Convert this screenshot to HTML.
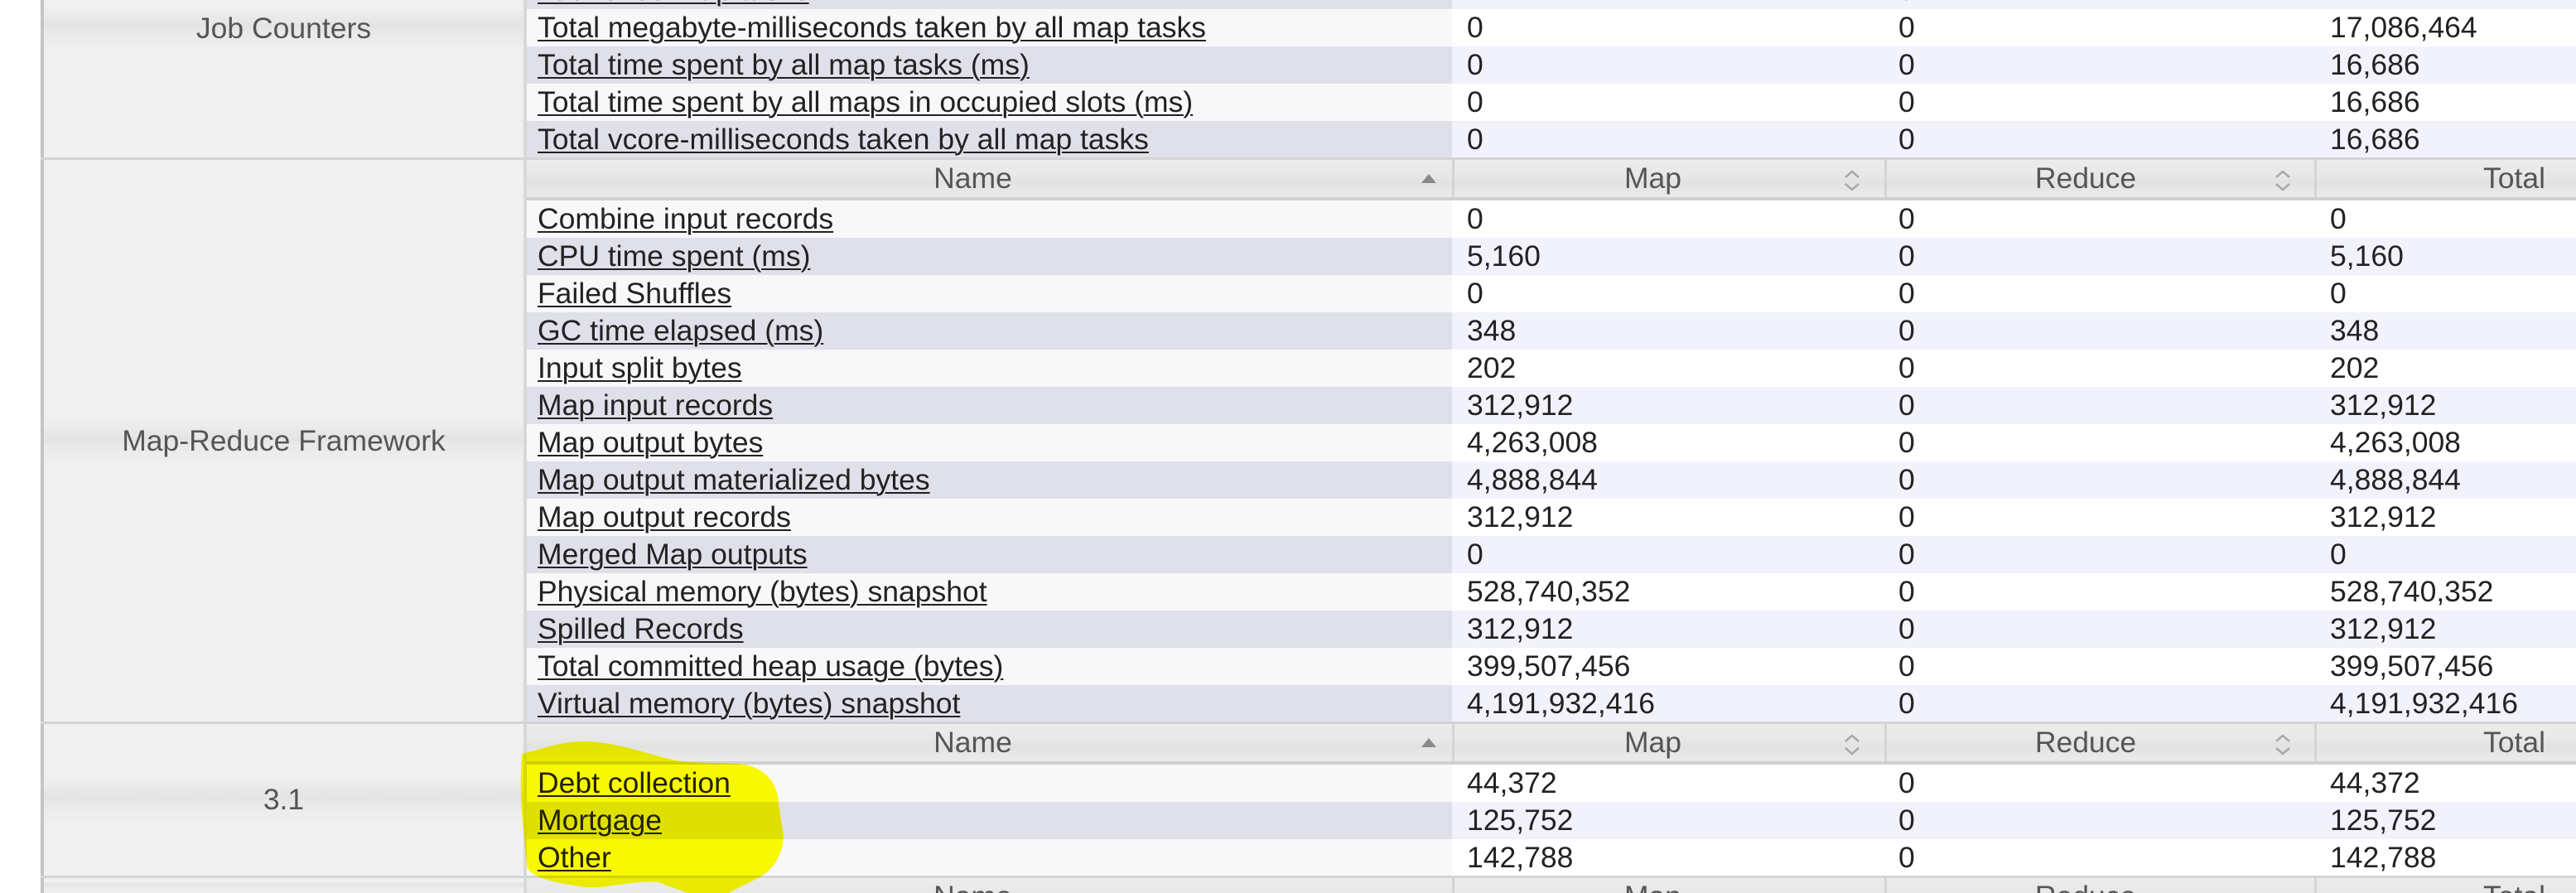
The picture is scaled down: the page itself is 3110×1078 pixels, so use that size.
<!DOCTYPE html>
<html><head><meta charset="utf-8">
<style>
html,body{margin:0;padding:0;background:#fff;width:3110px;height:1078px;overflow:hidden;font-family:"Liberation Sans",Arial,sans-serif;position:relative;}
.wrap{position:absolute;left:0;top:0;width:3110px;height:1078px;overflow:hidden;}
.sec{position:absolute;left:49px;width:3061px;overflow:hidden;}
.lab{position:absolute;left:0;top:0;bottom:0;width:579px;border-left:4px solid #c4c4c4;background:#f0f0f0;color:#555;font-size:35.5px;display:flex;align-items:center;justify-content:center;}
.lab span{width:100%;text-align:center;padding:6px 0;background:linear-gradient(#f0f0f0,#e4e4e4 45%,#e8e8e8 55%,#f0f0f0);}
.divd{position:absolute;left:583px;top:0;bottom:0;width:4px;background:#d8d8d8;}
.tbl{position:absolute;left:587px;top:0;width:2500px;}
.row{position:relative;height:45px;font-size:35.5px;color:#222;}
.row div{position:absolute;top:0;height:45px;line-height:45px;white-space:nowrap;}
.c0{left:0;width:1117px;padding-left:13px;box-sizing:border-box;}
.c0 a{color:#222;text-decoration:underline;text-decoration-thickness:2px;text-underline-offset:3px;}
.c1{left:1117px;width:522px;padding-left:18px;box-sizing:border-box;}
.c2{left:1639px;width:519px;padding-left:17px;box-sizing:border-box;}
.c3{left:2158px;width:520px;padding-left:19px;box-sizing:border-box;}
.o .c0{background:#f8f8f8}.o .c1,.o .c2,.o .c3{background:#fff}
.e .c0{background:#e0e0ea}.e .c1,.e .c2,.e .c3{background:#f2f2fc}
.hd{position:relative;height:45px;border-bottom:4px solid #d0d0d0;font-size:35.5px;color:#555;background:linear-gradient(#ececec,#e8e8e8 40%,#e2e2e2 60%,#ebebeb);}
.hd div{position:absolute;top:0;height:45px;line-height:45px;text-align:center;box-sizing:border-box;}
.hd .h0{left:0;width:1117px;padding-right:40px;}
.hd .h1{left:1117px;width:522px;border-left:3px solid #d4d4d4;padding-right:40px;}
.hd .h2{left:1639px;width:519px;border-left:3px solid #d4d4d4;padding-right:36px;}
.hd .h3{left:2158px;width:520px;border-left:3px solid #d4d4d4;padding-right:40px;}
.up{position:absolute;top:17px;width:0;height:0;border-left:9px solid transparent;border-right:9px solid transparent;border-bottom:11px solid #888;}
.ud{position:absolute;top:11px;}
.line{position:absolute;left:49px;width:3061px;height:4px;background:#d4d4d4;}
</style></head><body><div class="wrap">

<!-- Section 1: Job Counters -->
<div class="sec" style="top:-34px;height:226px;">
  <div class="lab" style="align-items:flex-start"><span style="margin-top:42px">Job Counters</span></div>
  <div class="divd"></div>
  <div class="tbl">
    <div class="row e"><div class="c0"><a>Launched map tasks</a></div><div class="c1">2</div><div class="c2">0</div><div class="c3">2</div></div>
    <div class="row o"><div class="c0"><a>Total megabyte-milliseconds taken by all map tasks</a></div><div class="c1">0</div><div class="c2">0</div><div class="c3">17,086,464</div></div>
    <div class="row e"><div class="c0"><a>Total time spent by all map tasks (ms)</a></div><div class="c1">0</div><div class="c2">0</div><div class="c3">16,686</div></div>
    <div class="row o"><div class="c0"><a>Total time spent by all maps in occupied slots (ms)</a></div><div class="c1">0</div><div class="c2">0</div><div class="c3">16,686</div></div>
    <div class="row e"><div class="c0"><a>Total vcore-milliseconds taken by all map tasks</a></div><div class="c1">0</div><div class="c2">0</div><div class="c3">16,686</div></div>
  </div>
</div>
<div class="line" style="top:190px;"></div>

<!-- Section 2 -->
<div class="sec" style="top:193px;height:678px;">
  <div class="lab"><span>Map-Reduce Framework</span></div>
  <div class="divd"></div>
  <div class="tbl">
    <div class="hd"><div class="h0">Name</div><span class="up" style="left:1080px"></span><div class="h1">Map</div><svg class="ud" style="left:1589px" width="22" height="28"><path d="M3 10 L11 3 L19 10 M3 18 L11 25 L19 18" fill="none" stroke="#a8a8a8" stroke-width="2.5"/></svg><div class="h2">Reduce</div><svg class="ud" style="left:2109px" width="22" height="28"><path d="M3 10 L11 3 L19 10 M3 18 L11 25 L19 18" fill="none" stroke="#a8a8a8" stroke-width="2.5"/></svg><div class="h3">Total</div></div>
    <div class="row o"><div class="c0"><a>Combine input records</a></div><div class="c1">0</div><div class="c2">0</div><div class="c3">0</div></div>
    <div class="row e"><div class="c0"><a>CPU time spent (ms)</a></div><div class="c1">5,160</div><div class="c2">0</div><div class="c3">5,160</div></div>
    <div class="row o"><div class="c0"><a>Failed Shuffles</a></div><div class="c1">0</div><div class="c2">0</div><div class="c3">0</div></div>
    <div class="row e"><div class="c0"><a>GC time elapsed (ms)</a></div><div class="c1">348</div><div class="c2">0</div><div class="c3">348</div></div>
    <div class="row o"><div class="c0"><a>Input split bytes</a></div><div class="c1">202</div><div class="c2">0</div><div class="c3">202</div></div>
    <div class="row e"><div class="c0"><a>Map input records</a></div><div class="c1">312,912</div><div class="c2">0</div><div class="c3">312,912</div></div>
    <div class="row o"><div class="c0"><a>Map output bytes</a></div><div class="c1">4,263,008</div><div class="c2">0</div><div class="c3">4,263,008</div></div>
    <div class="row e"><div class="c0"><a>Map output materialized bytes</a></div><div class="c1">4,888,844</div><div class="c2">0</div><div class="c3">4,888,844</div></div>
    <div class="row o"><div class="c0"><a>Map output records</a></div><div class="c1">312,912</div><div class="c2">0</div><div class="c3">312,912</div></div>
    <div class="row e"><div class="c0"><a>Merged Map outputs</a></div><div class="c1">0</div><div class="c2">0</div><div class="c3">0</div></div>
    <div class="row o"><div class="c0"><a>Physical memory (bytes) snapshot</a></div><div class="c1">528,740,352</div><div class="c2">0</div><div class="c3">528,740,352</div></div>
    <div class="row e"><div class="c0"><a>Spilled Records</a></div><div class="c1">312,912</div><div class="c2">0</div><div class="c3">312,912</div></div>
    <div class="row o"><div class="c0"><a>Total committed heap usage (bytes)</a></div><div class="c1">399,507,456</div><div class="c2">0</div><div class="c3">399,507,456</div></div>
    <div class="row e"><div class="c0"><a>Virtual memory (bytes) snapshot</a></div><div class="c1">4,191,932,416</div><div class="c2">0</div><div class="c3">4,191,932,416</div></div>
  </div>
</div>
<div class="line" style="top:871px;"></div>

<!-- Section 3 -->
<div class="sec" style="top:874px;height:183px;">
  <div class="lab"><span>3.1</span></div>
  <div class="divd"></div>
  <div class="tbl">
    <div class="hd"><div class="h0">Name</div><span class="up" style="left:1080px"></span><div class="h1">Map</div><svg class="ud" style="left:1589px" width="22" height="28"><path d="M3 10 L11 3 L19 10 M3 18 L11 25 L19 18" fill="none" stroke="#a8a8a8" stroke-width="2.5"/></svg><div class="h2">Reduce</div><svg class="ud" style="left:2109px" width="22" height="28"><path d="M3 10 L11 3 L19 10 M3 18 L11 25 L19 18" fill="none" stroke="#a8a8a8" stroke-width="2.5"/></svg><div class="h3">Total</div></div>
    <div class="row o"><div class="c0"><a>Debt collection</a></div><div class="c1">44,372</div><div class="c2">0</div><div class="c3">44,372</div></div>
    <div class="row e"><div class="c0"><a>Mortgage</a></div><div class="c1">125,752</div><div class="c2">0</div><div class="c3">125,752</div></div>
    <div class="row o"><div class="c0"><a>Other</a></div><div class="c1">142,788</div><div class="c2">0</div><div class="c3">142,788</div></div>
  </div>
</div>
<div class="line" style="top:1057px;"></div>

<!-- Section 4 (partial) -->
<div class="sec" style="top:1060px;height:18px;">
  <div class="lab"><span></span></div>
  <div class="divd"></div>
  <div class="tbl">
    <div class="hd"><div class="h0">Name</div><div class="h1">Map</div><div class="h2">Reduce</div><div class="h3">Total</div></div>
  </div>
</div>

<!-- yellow highlight -->
<svg style="position:absolute;left:0;top:0;mix-blend-mode:multiply" width="3110" height="1078">
<path fill="#ffff00" d="M630 910 C660 903 680 894 710 895 C760 898 790 915 830 920 L890 922 C935 925 940 960 940 970 L946 1010 C945 1030 935 1050 915 1060 L895 1070 L880 1078 L830 1078 L795 1065 C760 1062 730 1075 700 1070 C670 1065 640 1060 636 1045 L632 1000 C628 970 628 940 630 910 Z"/>
</svg>
</div></body></html>
